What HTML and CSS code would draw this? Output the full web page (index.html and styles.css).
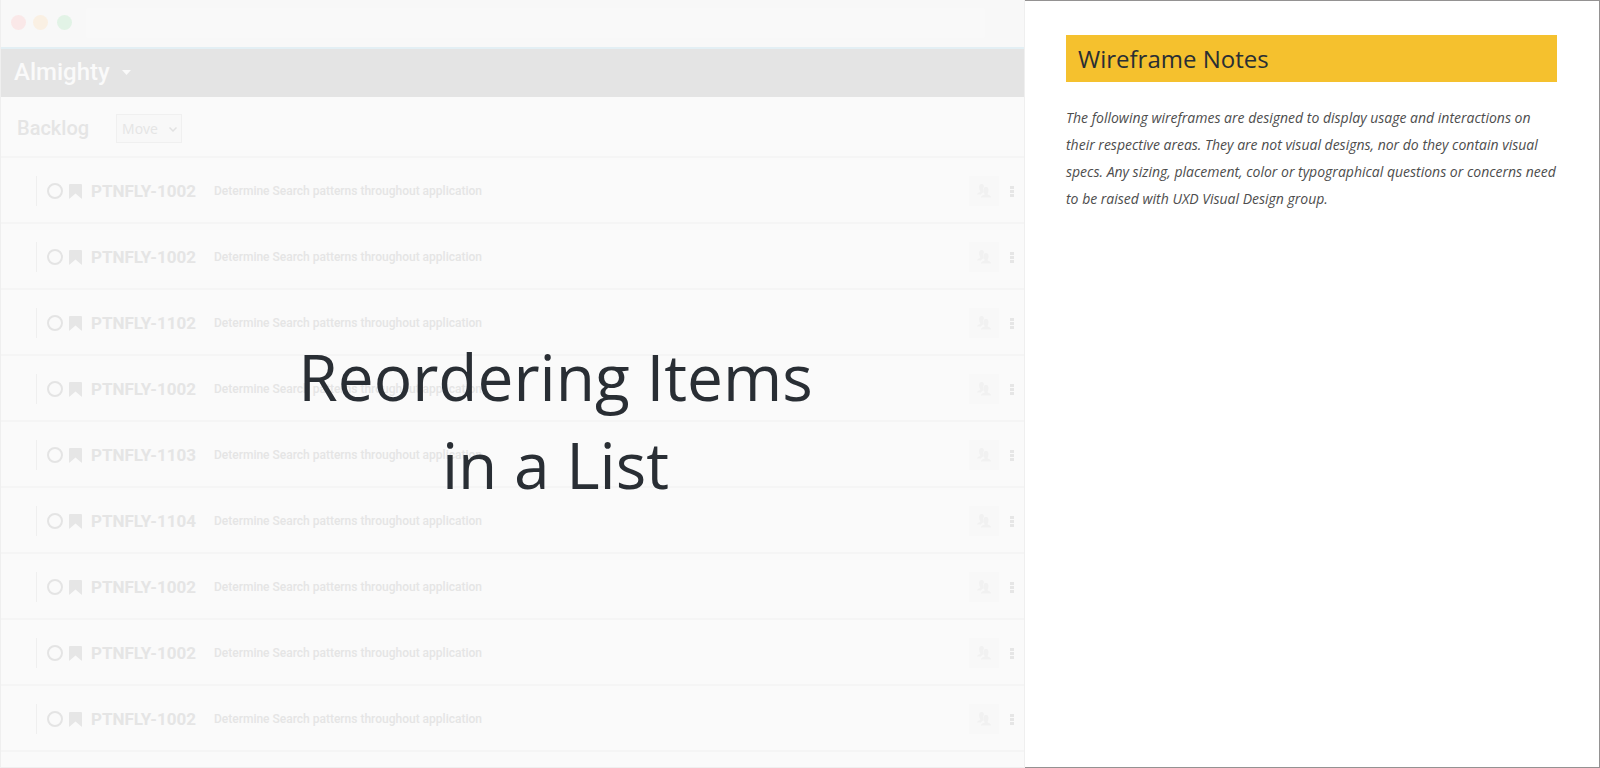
FILE: index.html
```html
<!DOCTYPE html>
<html lang="en">
<head>
<meta charset="utf-8">
<title>Reordering Items in a List</title>
<link rel="stylesheet" href="styles.css">
</head>
<body>
<svg class="symbols" aria-hidden="true">
  <symbol id="pick-bookmark" viewBox="0 0 13 15"><path d="M1 0H12Q13 0 13 1V14.2Q13 15 12.3 14.6L6.5 9.6L0.7 14.6Q0 15 0 14.2V1Q0 0 1 0Z"/></symbol>
  <symbol id="users" viewBox="0 0 14 14"><path d="M4.500 0C6.200 0 7 1.200 7 3C5.800 4 5.700 6.500 6.800 8.200C5.300 8.800 4.300 9.400 3.900 10.500H0C0 9 1.500 8.600 3 7.900C3.500 7.500 3.200 7 2.700 6.200C1.600 3.500 2 0 4.500 0Z"/><path d="M9 3C11.500 3 12 5.500 11.100 8.500C10.800 9.500 10.300 10 10.600 10.600C12 11.600 14 11.500 14 13.500H4C4 11.500 6.300 11.600 7.600 10.600C7.800 10 7.200 9.500 6.900 8.500C6 5.500 6.500 3 9 3Z"/></symbol>
  <symbol id="kebab" viewBox="0 0 4 11"><path d="M0 0H4V3H0ZM0 4H4V7H0ZM0 8H4V11H0Z"/></symbol>
</svg>
<div class="page">
  <main class="wireframe">
    <div class="titlebar">
      <span class="dot red"></span><span class="dot amber"></span><span class="dot green"></span>
      <input class="address" type="text" aria-label="Address">
    </div>
    <nav class="navbar">
      <button class="brand" type="button">Almighty
        <svg width="9" height="5" viewBox="0 0 9 5" aria-hidden="true"><path d="M0 0H9L4.500 5Z"/></svg>
      </button>
    </nav>
    <div class="toolbar">
      <h2 class="toolbar-title">Backlog</h2>
      <div class="move">
        <select class="move-select" aria-label="Move"><option>Move</option></select>
        <svg class="chevron" width="8" height="5" viewBox="0 0 8 5" aria-hidden="true"><path d="M0.500 0.500L4 4L7.500 0.500"/></svg>
      </div>
    </div>
    <ul class="list" id="list"></ul>
    <div class="cover"><h1 class="cover-title">Reordering Items<br>in a List</h1></div>
  </main>
  <aside class="notes">
    <h2 class="notes-title">Wireframe Notes</h2>
    <p class="notes-text">The following wireframes are designed to display usage and interactions on their respective areas. They are not visual designs, nor do they contain visual specs. Any sizing, placement, color or typographical questions or concerns need to be raised with UXD Visual Design group.</p>
  </aside>
</div>
<script src="list.js"></script>
</body>
</html>
```
FILE: styles.css
```css
* { box-sizing: border-box; }
body { margin: 0; font-family: "Open Sans", sans-serif; background: #fff; }
h1, h2, p, ul { margin: 0; padding: 0; font-weight: 400; }
button, input, select { font: inherit; margin: 0; padding: 0; border: 0; background: none; color: inherit; }
.symbols { position: absolute; width: 0; height: 0; }
.page { display: grid; grid-template-columns: 41fr 23fr; min-height: 100vh; }

.wireframe { position: relative; display: flex; flex-direction: column; border: solid #efefef; border-width: 0 1px 1px; background: #fafafa; color: #e5e5e5; font-family: Roboto, sans-serif; }
.titlebar { display: flex; align-items: center; height: 49px; padding: 0 39px 2px 10px; background: #f8f8f8; border-bottom: 2px solid #e3eff4; }
.dot { width: 15px; height: 15px; margin-right: 7px; border-radius: 50%; }
.red { background: #fae8e8; }
.amber { background: #faf0e3; margin-right: 9px; }
.green { background: #e2f3e6; margin-right: 14px; }
.address { flex: 1; min-width: 0; height: 30px; background: #f9f9f9; border-radius: 3px; }
.navbar { display: flex; align-items: center; height: 48px; padding: 0 13px 2px; background: #e4e4e4; color: #fafafa; }
.brand { display: flex; align-items: center; gap: 12px; font-size: 24px; font-weight: 500; }
.brand svg { fill: #fafafa; }
.toolbar { display: flex; align-items: center; gap: 27px; height: 61px; padding: 3px 16px 0; border-bottom: 2px solid #f5f5f5; }
.toolbar-title { font-size: 20px; font-weight: 500; }
.move { position: relative; }
.move-select { display: block; width: 66px; height: 29px; padding: 0 5px; border: 1px solid #f0f0f0; background: #f8f8f8; font-family: "Open Sans", sans-serif; font-size: 14px; appearance: none; }
.chevron { position: absolute; right: 5px; top: 13px; fill: none; stroke: #e2e2e2; stroke-width: 1.5; pointer-events: none; }

.list { list-style: none; }
.row { display: flex; align-items: center; height: 66px; padding: 2px 10px 0 35px; border-bottom: 2px solid #f5f5f5; }
.grip { width: 1px; height: 30px; margin-right: 10px; background: #efefef; }
.pick { appearance: none; width: 16px; height: 16px; margin: 0 6px 0 0; border: 2px solid #e4e4e4; border-radius: 50%; }
.bookmark { margin-right: 9px; fill: #e6e6e6; }
.key { width: 123px; font-size: 17px; font-weight: 700; }
.summary { flex: 1; font-size: 12px; font-weight: 500; }
.assign { display: grid; place-items: center; width: 30px; height: 30px; margin-right: 11px; background: #f8f8f8; fill: #f1f1f1; }
.menu { display: flex; fill: #e6e6e6; }

.cover { position: absolute; inset: 0; display: grid; place-items: center; padding: 74px 0 0 86px; pointer-events: none; }
.cover-title { color: #292e34; font-family: "Open Sans", sans-serif; font-size: 64px; line-height: 88px; text-align: center; }

.notes { padding: 34px 42px 34px 41px; border: 1px solid #949292; border-left: 0; }
.notes-title { padding: 0 12px; background: #f5c12e; color: #292e34; font-size: 24px; line-height: 47px; }
.notes-text { margin-top: 22px; color: #4d4d4d; font-size: 14px; font-style: italic; line-height: 27px; }
```
FILE: list.js
```js
const keys = ["1002", "1002", "1102", "1002", "1103", "1104", "1002", "1002", "1002"];
document.getElementById("list").innerHTML = keys.map((n, i) => `
  <li class="row">
    <span class="grip"></span>
    <input class="pick" type="radio" name="item" id="item-${i}">
    <svg class="bookmark" width="13" height="15" aria-hidden="true"><use href="#pick-bookmark"/></svg>
    <label class="key" for="item-${i}">PTNFLY-${n}</label>
    <span class="summary">Determine Search patterns throughout application</span>
    <button class="assign" type="button" aria-label="Assign"><svg width="14" height="14"><use href="#users"/></svg></button>
    <button class="menu" type="button" aria-label="More actions"><svg width="4" height="11"><use href="#kebab"/></svg></button>
  </li>`).join("");
```
